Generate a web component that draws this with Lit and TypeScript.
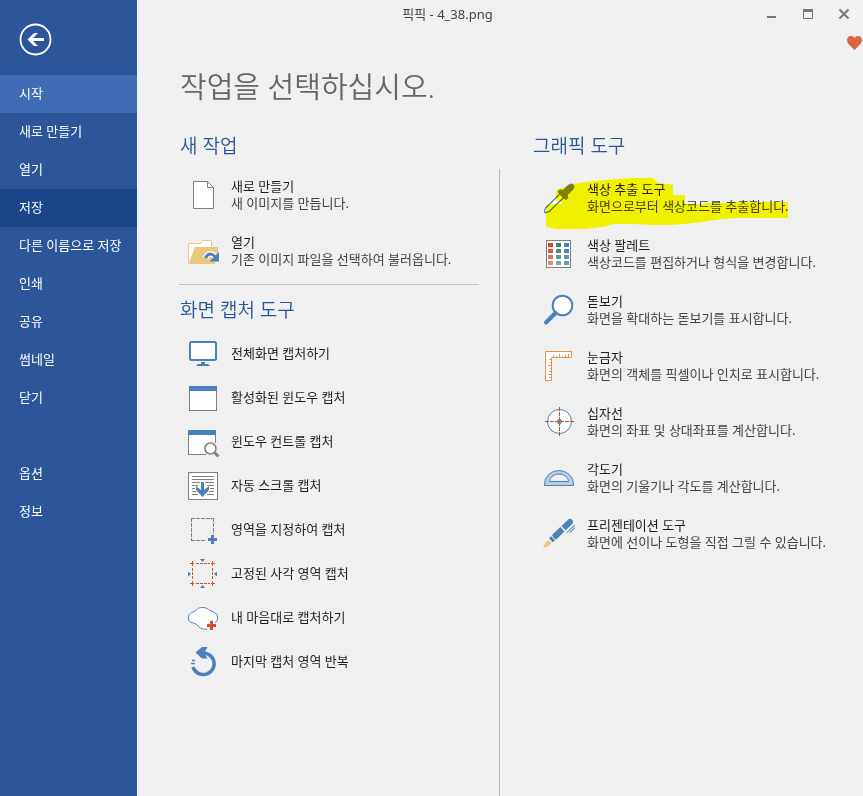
import { LitElement, html, svg, css, type TemplateResult } from "lit";
import { customElement, property, state } from "lit/decorators.js";
import { classMap } from "lit/directives/class-map.js";

const plus = (x: number, y: number, color: string) =>
  svg`<path d="M${x + 3} ${y}h3v3h3v3h-3v3h-3v-3h-3v-3h3z" fill=${color} />`;

const paletteColumns = [
  ["#d2472a", "#dc5a3f", "#e2705a", "#e08a75"],
  ["#467f69", "#568d77", "#659a86", "#78ab98"],
  ["#4a80bb", "#4f83b5", "#6690b4", "#6c99b8"],
];

const icons: Record<string, TemplateResult> = {
  document: svg`
    <path d="M6.500 2.500h14l6 6v21h-20z" fill="#fff" stroke="#808080" />
    <path d="M20.500 2.500v6h6" fill="none" stroke="#808080" />`,
  folder: svg`
    <path d="M1.500 28V9.500q0-1 1-1h11l2-3h7q1.500 0 2 1.500v4.500" fill="#fff" stroke="#edc67e" />
    <path d="M8 12h23l-5 17H1.500z" fill="#edc67e" />
    <path d="M31 12v8l-3-2v11H2z" fill="#edc67e" />
    <path d="M18.500 23q4-8 11 0" fill="none" stroke="#f4f4f4" stroke-width="6" />
    <path d="M18.500 23q4-8 11 0" fill="none" stroke="#4a80bb" stroke-width="3" />
    <path d="M32 17v9.500h-9.500z" fill="#4a80bb" />`,
  monitor: svg`
    <rect x="3" y="5" width="26" height="18" rx="1.500" fill="#fff" stroke="#4a80bb" stroke-width="2" />
    <path d="M14 25h4v2h3l2 2H9l2-2h3z" fill="#4a80bb" />`,
  window: svg`
    <rect x="2.500" y="5.500" width="27" height="24" fill="#fff" stroke="#808080" />
    <rect x="2" y="5" width="28" height="5" fill="#4a80bb" />`,
  control: svg`
    <rect x="1.500" y="5.500" width="27" height="24" fill="#fff" stroke="#808080" />
    <rect x="1" y="5" width="28" height="5" fill="#4a80bb" />
    <circle cx="23.500" cy="23.500" r="7.500" fill="#f0f0f0" />
    <path d="M27 27l4 4" stroke="#f0f0f0" stroke-width="6" />
    <circle cx="23.500" cy="23.500" r="5.500" fill="#fff" stroke="#808080" stroke-width="1.500" />
    <path d="M27.500 27.500l4 4" stroke="#808080" stroke-width="3" />`,
  scroll: svg`
    <rect x="1.500" y="3.500" width="29" height="27" fill="#fff" stroke="#808080" />
    <path d="M5 7.500h22M5 10.500h22M5 13.500h8M18 13.500h9M5 16.500h6M20 16.500h7M5 19.500h3M23 19.500h4M5 22.500h4M22 22.500h5M5 25.500h6M20 25.500h7" stroke="#808080" />
    <path d="M14 13h3v8l5-4v4l-6.500 7L9 21v-4l5 4z" fill="#4a80bb" />`,
  region: svg`
    <path d="M4 5.500h23M26.500 5v16M4.500 5v23M4 27.500h15" fill="none" stroke="#808080" stroke-dasharray="4 1" />
    ${plus(21, 22, "#4a80bb")}`,
  fixed: svg`
    <path d="M3 6.500h4M9 6.500h3M13 6.500h3M17 6.500h3M21 6.500h2M24 6.500h4M3 26.500h4M9 26.500h3M13 26.500h3M17 26.500h3M21 26.500h2M24 26.500h4M5.500 4v5M5.500 11v3M5.500 15v3M5.500 19v3M5.500 24v5M25.500 4v5M25.500 11v3M25.500 15v3M25.500 19v3M25.500 24v5" stroke="#d2522f" />
    <path d="M13 2h5l-2.500 3zM13 31h5l-2.500-3zM1 14.500v5l3-2.500zM30 14.500v5l-3-2.500z" fill="#4a80bb" />`,
  free: svg`
    <path d="M15.500 6.500C10.500 6.500 10 9 7 10.500 3 12 1.500 13.500 1.500 17s1.500 4.500 5 5c3.500.5 3.500 3 7 5s10 2 12-2 5.500-4 5-9-5-5-7.500-6.500-3-3-7.500-3z" fill="#fff" stroke="#4a80bb" />
    <path d="M23 19h3v3h5v5h-5v3h-6v-8h3z" fill="#f0f0f0" />
    ${plus(20, 20, "#d2522f")}`,
  repeat: svg`
    <path d="M16 8A10.800 10.800 0 1 1 6 22" fill="none" stroke="#4a80bb" stroke-width="3.500" />
    <path d="M8.500 7.500L15 2h5.500L18 6.500V9l2.500 4.500H15z" fill="#4a80bb" />
    <path d="M5 15.500h3M4 18.500h4" stroke="#4a80bb" stroke-width="1.500" />`,
  dropper: svg`
    <g transform="translate(1 31) rotate(-44)">
      <path d="M25 -2.500H5Q3 -2.500 .8 0 3 2.500 5 2.500H25" fill="#fff" stroke="#4a80bb" stroke-width="1.300" />
      <path d="M24 -3.500l1-2.500h3l1.500 2.500H36q5 0 5 3.500t-5 3.500h-6.500L28 6h-3l-1-2.500z" fill="#808080" />
    </g>`,
  palette: svg`
    <rect x="3.500" y="2.500" width="24" height="27" fill="#fff" stroke="#808080" />
    ${paletteColumns.map((column, c) =>
      column.map((color, r) => svg`<rect x=${5 + c * 8} y=${5 + r * 6} width="5" height="4" fill=${color} />`)
    )}`,
  magnifier: svg`
    <circle cx="19.500" cy="11.500" r="9.800" fill="#fff" stroke="#4a80bb" stroke-width="2" />
    <path d="M12.500 19L3 28.500" stroke="#4a80bb" stroke-width="4" stroke-linecap="round" />`,
  ruler: svg`
    <path d="M2.500 1.500h26v6h-20v23h-6z" fill="#fff" stroke="#e6924a" />
    <path d="M10.500 8V5M13.500 8V6M16.500 8V4M19.500 8V6M22.500 8V5M25.500 8V4M9 9.500H6M9 12.500H7M9 15.500H5M9 18.500H7M9 21.500H6M9 24.500H5M9 27.500H6" stroke="#e6924a" />`,
  cross: svg`
    <circle cx="16.500" cy="15.500" r="12" fill="#fff" stroke="#4a80bb" />
    <path d="M16.500 1v29M2 15.500h29" stroke="#c04a2c" stroke-dasharray="4 1" />
    <circle cx="16.500" cy="15.500" r="2.500" fill="#808080" />`,
  protractor: svg`
    <path fill-rule="evenodd" d="M1.500 23.500V22a14.500 13.500 0 0 1 29 0v1.500zM6.500 19.500h19a9.500 7.500 0 0 0-19 0z" fill="#bccde3" stroke="#4a80bb" />`,
  pen: svg`
    <g transform="translate(0 30) rotate(-44)">
      <path d="M0 0L5 -2H9.500V2.500H5z" fill="#edc67e" />
      <path d="M11 -2.800h3v5.600h-3zM15.500 -3H27V3H15.500q-1.500-3 0-6zM28.500 -3H37q3.500 0 3.500 3t-3.500 3h-8.500z" fill="#4a80bb" />
      <path d="M28 5.500h11M30 7.500h7" stroke="#4a80bb" stroke-width="1" />
    </g>`,
};

interface Action {
  icon: string;
  title: string;
  note?: string;
}

const newTasks: Action[] = [
  { icon: "document", title: "새로 만들기", note: "새 이미지를 만듭니다." },
  { icon: "folder", title: "열기", note: "기존 이미지 파일을 선택하여 불러옵니다." },
];

const captureTools: Action[] = [
  { icon: "monitor", title: "전체화면 캡처하기" },
  { icon: "window", title: "활성화된 윈도우 캡처" },
  { icon: "control", title: "윈도우 컨트롤 캡처" },
  { icon: "scroll", title: "자동 스크롤 캡처" },
  { icon: "region", title: "영역을 지정하여 캡처" },
  { icon: "fixed", title: "고정된 사각 영역 캡처" },
  { icon: "free", title: "내 마음대로 캡처하기" },
  { icon: "repeat", title: "마지막 캡처 영역 반복" },
];

const graphicTools: Action[] = [
  { icon: "dropper", title: "색상 추출 도구", note: "화면으로부터 색상코드를 추출합니다." },
  { icon: "palette", title: "색상 팔레트", note: "색상코드를 편집하거나 형식을 변경합니다." },
  { icon: "magnifier", title: "돋보기", note: "화면을 확대하는 돋보기를 표시합니다." },
  { icon: "ruler", title: "눈금자", note: "화면의 객체를 픽셀이나 인치로 표시합니다." },
  { icon: "cross", title: "십자선", note: "화면의 좌표 및 상대좌표를 계산합니다." },
  { icon: "protractor", title: "각도기", note: "화면의 기울기나 각도를 계산합니다." },
  { icon: "pen", title: "프리젠테이션 도구", note: "화면에 선이나 도형을 직접 그릴 수 있습니다." },
];

const menuGroups = [
  ["시작", "새로 만들기", "열기", "저장", "다른 이름으로 저장", "인쇄", "공유", "썸네일", "닫기"],
  ["옵션", "정보"],
];

const resetButton = css`
  button {
    margin: 0;
    padding: 0;
    border: 0;
    background: none;
    color: inherit;
    font: inherit;
    text-align: left;
    cursor: pointer;
  }
`;

@customElement("action-item")
class ActionItem extends LitElement {
  @property({ attribute: false }) action!: Action;

  static styles = [
    resetButton,
    css`
      :host {
        display: block;
      }
      .item {
        display: flex;
        align-items: center;
        gap: 12px;
        width: 100%;
        height: 44px;
        white-space: nowrap;
      }
      .item.tall {
        height: 56px;
      }
      .icon {
        flex: none;
        width: 32px;
        height: 32px;
        overflow: visible;
      }
      .text {
        display: flex;
        flex-direction: column;
        font-size: 13px;
        line-height: 17px;
        color: #1e1e1e;
      }
      .note {
        color: #444;
      }
    `,
  ];

  render() {
    const { icon, title, note } = this.action;
    return html`<button type="button" class=${classMap({ item: true, tall: !!note })}>
      <svg class="icon" viewBox="0 0 32 32" aria-hidden="true">${icons[icon]}</svg>
      <span class="text">
        <span>${title}</span>
        ${note ? html`<span class="note">${note}</span>` : ""}
      </span>
    </button>`;
  }
}

@customElement("app-root")
class AppRoot extends LitElement {
  @state() private current = "시작";
  @state() private pressed = "저장";

  static styles = [
    resetButton,
    css`
      :host {
        display: flex;
        min-height: 100vh;
        background: #f0f0f0;
        font-family: "Noto Sans", "Noto Sans CJK KR", sans-serif;
        font-size: 13px;
        line-height: 17px;
      }
      .side {
        flex: none;
        display: flex;
        flex-direction: column;
        width: 137px;
        background: #2b579a;
        color: #fff;
      }
      .side .back {
        width: 33px;
        height: 33px;
        margin: 23px 0 19px 19px;
      }
      .back svg {
        display: block;
      }
      .group {
        display: flex;
        flex-direction: column;
        margin-bottom: 38px;
      }
      .side .entry {
        height: 38px;
        padding: 0 0 2px 19px;
        white-space: nowrap;
      }
      .side .current {
        background: #3e6db5;
      }
      .side .pressed {
        background: #19478a;
      }
      .page {
        flex: 1;
        min-width: 0;
        display: flex;
        flex-direction: column;
      }
      .bar {
        display: flex;
        align-items: center;
        height: 28px;
        padding-right: 1px;
        color: #444;
      }
      .caption {
        flex: 1;
        padding-left: 4px;
        text-align: center;
      }
      .control {
        display: grid;
        place-items: center;
        width: 36px;
        height: 28px;
      }
      .favorite {
        align-self: flex-end;
        height: 28px;
        padding: 8px 1px 6px 0;
        box-sizing: border-box;
      }
      .favorite svg {
        display: block;
      }
      h1,
      h2 {
        margin: 0;
        font-weight: 350;
      }
      h1 {
        padding-left: 43px;
        font-size: 29px;
        line-height: 40px;
        color: #666;
        margin-top: 11px;
      }
      h2 {
        padding-left: 1px;
        font-size: 19px;
        line-height: 28px;
        color: #2b579a;
      }
      .columns {
        flex: 1;
        display: grid;
        grid-template-columns: minmax(0, 300px) 1px minmax(0, 1fr);
        column-gap: 20px;
        padding: 25px 0 0 42px;
      }
      .divider {
        margin-top: 37px;
        background: #b4b4b4;
      }
      .list {
        margin: 0;
        padding: 0 0 0 8px;
        list-style: none;
      }
      .tasks {
        padding-top: 7px;
        padding-bottom: 5px;
        border-bottom: 1px solid #c0c0c0;
        margin-bottom: 11px;
      }
      .captures {
        padding-top: 7px;
      }
      .graphics {
        padding-left: 12px;
      }
      .graphics .list {
        padding: 10px 0 0 11px;
      }
      .marked {
        position: relative;
      }
      .marker {
        position: absolute;
        top: 0;
        left: 0;
        overflow: visible;
        mix-blend-mode: multiply;
        pointer-events: none;
      }
    `,
  ];

  private list(actions: Action[]) {
    return actions.map((action) => html`<li><action-item .action=${action}></action-item></li>`);
  }

  render() {
    return html`
      <nav class="side">
        <button type="button" class="back" aria-label="뒤로">
          <svg width="33" height="33" viewBox="0 0 33 33">
            <circle cx="16.500" cy="16.500" r="15" fill="none" stroke="#fff" stroke-width="1.800" />
            <path d="M8.500 16.500l6.500-6.500h4l-5 5h11v3H14l5 5h-4z" fill="#fff" />
          </svg>
        </button>
        ${menuGroups.map(
          (group) => html`<div class="group">
            ${group.map(
              (name) => html`<button
                type="button"
                class=${classMap({ entry: true, current: name === this.current, pressed: name === this.pressed })}
                @click=${() => (this.current = name)}
              >${name}</button>`
            )}
          </div>`
        )}
      </nav>
      <div class="page">
        <header class="bar">
          <span class="caption">픽픽 - 4_38.png</span>
          <button type="button" class="control" aria-label="최소화">
            <svg width="12" height="12" viewBox="0 0 12 12"><path d="M1 8h9v2H1z" fill="#777" /></svg>
          </button>
          <button type="button" class="control" aria-label="최대화">
            <svg width="12" height="12" viewBox="0 0 12 12">
              <path d="M1 1h10v10H1zM2 4v6h8V4z" fill="#777" fill-rule="evenodd" />
            </svg>
          </button>
          <button type="button" class="control" aria-label="닫기">
            <svg width="12" height="12" viewBox="0 0 12 12">
              <path d="M1.500 1.500l9 9M10.500 1.500l-9 9" stroke="#777" stroke-width="2" />
            </svg>
          </button>
        </header>
        <button type="button" class="favorite" aria-label="즐겨찾기">
          <svg width="15" height="14" viewBox="0 0 15 14">
            <path d="M7.500 14L1.500 8Q0 6 0 4 .5 0 4 0 6.500 0 7.500 2 8.500 0 11 0q3.500 0 4 4 0 2-1.500 4z" fill="#dc6446" />
          </svg>
        </button>
        <h1>작업을 선택하십시오.</h1>
        <main class="columns">
          <div>
            <section>
              <h2>새 작업</h2>
              <ul class="list tasks">${this.list(newTasks)}</ul>
            </section>
            <section>
              <h2>화면 캡처 도구</h2>
              <ul class="list captures">${this.list(captureTools)}</ul>
            </section>
          </div>
          <div class="divider"></div>
          <section class="graphics">
            <h2>그래픽 도구</h2>
            <div class="marked">
              <ul class="list">${this.list(graphicTools)}</ul>
              <svg class="marker" width="260" height="72" viewBox="0 0 260 72" aria-hidden="true">
                <path
                  d="M24 30L42 24 54 22 72 20 86 19 100 18H121L126 23 137 24 141 25V35H153V44H172V43H196V42H256V58H204L182 60 170 62 152 64 140 65 120 65 100 64 83 64 70 67 52 69H24L14 67V46L20 44H30V42L24 41z"
                  fill="#ffff00"
                />
              </svg>
            </div>
          </section>
        </main>
      </div>
    `;
  }
}
